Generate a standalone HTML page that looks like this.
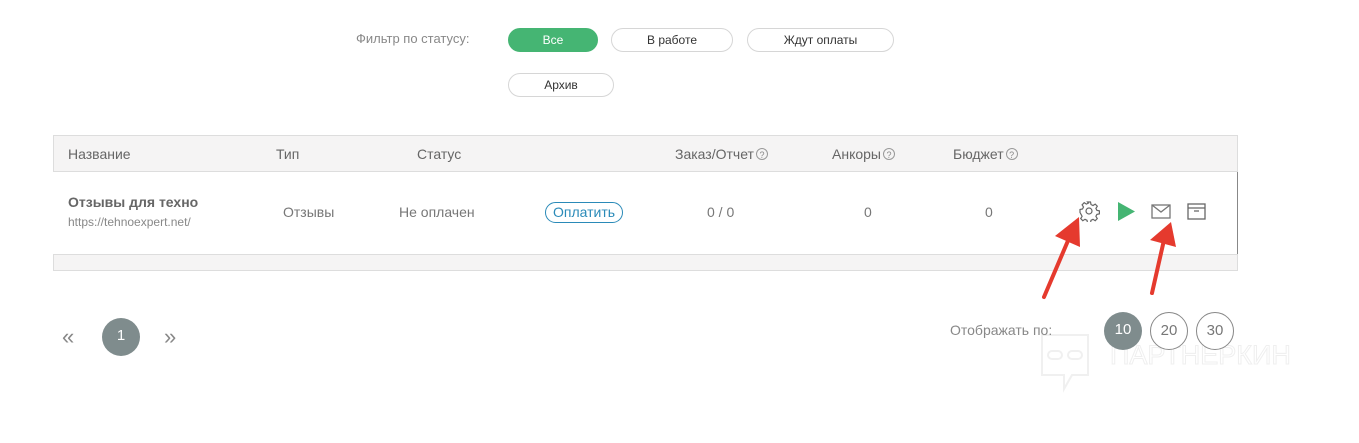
<!DOCTYPE html>
<html><head><meta charset="utf-8"><style>
body{margin:0;width:1359px;height:443px;background:#fff;font-family:"Liberation Sans",sans-serif;position:relative;overflow:hidden;color:#666}
.a{position:absolute}
.btn{position:absolute;height:24px;border:1px solid #d6d6d6;border-radius:13px;box-sizing:border-box;font-size:12px;color:#333;text-align:center;line-height:22px}
.h{position:absolute;top:146px;font-size:14px;color:#666}
.q{display:inline-block;width:12px;height:12px;border:1px solid #999;border-radius:50%;font-size:9px;line-height:12px;text-align:center;color:#888;vertical-align:1px;margin-left:2px;box-sizing:border-box}
.c{position:absolute;top:204px;font-size:14px;color:#777}
.pg{position:absolute;width:38px;height:38px;border-radius:50%;box-sizing:border-box;text-align:center;line-height:36px;font-size:15px}
</style></head><body>
<div class="a" style="left:356px;top:31px;font-size:13px;color:#888">Фильтр по статусу:</div>
<div class="btn" style="left:508px;top:28px;width:90px;background:#45b573;border-color:#45b573;color:#fff">Все</div>
<div class="btn" style="left:611px;top:28px;width:122px">В работе</div>
<div class="btn" style="left:747px;top:28px;width:147px">Ждут оплаты</div>
<div class="btn" style="left:508px;top:73px;width:106px">Архив</div>

<div class="a" style="left:53px;top:135px;width:1185px;height:37px;background:#f5f4f4;border:1px solid #ddd;box-sizing:border-box"></div>
<div class="a" style="left:53px;top:172px;width:1185px;height:82px;border-right:1px solid #888;box-sizing:border-box"></div>
<div class="a" style="left:53px;top:254px;width:1185px;height:17px;background:#f5f4f4;border:1px solid #ddd;box-sizing:border-box"></div>
<div class="h" style="left:68px">Название</div>
<div class="h" style="left:276px">Тип</div>
<div class="h" style="left:417px">Статус</div>
<div class="h" style="left:675px">Заказ/Отчет<span class="q">?</span></div>
<div class="h" style="left:832px">Анкоры<span class="q">?</span></div>
<div class="h" style="left:953px">Бюджет<span class="q">?</span></div>

<div class="a" style="left:68px;top:194px;font-size:14px;font-weight:bold;color:#666">Отзывы для техно</div>
<div class="a" style="left:68px;top:215px;font-size:12px;color:#888">https://tehnoexpert.net/</div>
<div class="c" style="left:283px">Отзывы</div>
<div class="c" style="left:399px">Не оплачен</div>
<div class="a" style="left:545px;top:202px;width:78px;height:21px;border:1px solid #2a8ab8;border-radius:11px;box-sizing:border-box;color:#2a8ab8;font-size:14px;text-align:center;line-height:19px">Оплатить</div>
<div class="c" style="left:707px">0 / 0</div>
<div class="c" style="left:864px">0</div>
<div class="c" style="left:985px">0</div>

<svg class="a" style="left:1078px;top:200px" width="22" height="22" viewBox="0 0 22 22"><g fill="none" stroke="#666" stroke-width="1.2"><circle cx="11" cy="11" r="3"/><path d="M9.5 2h3l.5 2.5 2 1 2.2-1.4 2.1 2.1-1.4 2.2 1 2 2.5.5v3l-2.5.5-1 2 1.4 2.2-2.1 2.1-2.2-1.4-2 1-.5 2.5h-3l-.5-2.5-2-1-2.2 1.4-2.1-2.1 1.4-2.2-1-2L2 12.5v-3l2.5-.5 1-2-1.4-2.2 2.1-2.1 2.2 1.4 2-1z"/></g></svg>
<svg class="a" style="left:1117px;top:201px" width="19" height="21"><path d="M1 1L18 10.5 1 20z" fill="#45b573"/></svg>
<svg class="a" style="left:1151px;top:204px" width="20" height="16"><rect x="1" y="1" width="18" height="13" fill="none" stroke="#777" stroke-width="1.3"/><path d="M1 1l9 7 9-7" fill="none" stroke="#777" stroke-width="1.3"/></svg>
<svg class="a" style="left:1187px;top:203px" width="19" height="17"><rect x="1" y="1" width="17" height="15" fill="none" stroke="#666" stroke-width="1.3"/><path d="M1 5h17M7 8h5" stroke="#666" stroke-width="1.3"/></svg>

<svg class="a" style="left:1040px;top:333px" width="50" height="60"><g fill="none" stroke="#f0f0f0" stroke-width="2"><path d="M2 2h46v40H32l-8 14v-14H2z"/><rect x="8" y="18" width="14" height="8" rx="4"/><rect x="28" y="18" width="14" height="8" rx="4"/></g></svg>
<div class="a" style="left:1110px;top:340px;font-size:27px;color:#fff;-webkit-text-stroke:1px #efefef">ПАРТНЕРКИН</div>

<div class="a" style="left:62px;top:324px;font-size:22px;color:#888">«</div>
<div class="pg" style="left:102px;top:318px;background:#7f8c8d;color:#fff">1</div>
<div class="a" style="left:164px;top:324px;font-size:22px;color:#888">»</div>

<div class="a" style="left:950px;top:322px;font-size:14px;color:#888">Отображать по:</div>
<div class="pg" style="left:1104px;top:312px;background:#7f8c8d;color:#fff">10</div>
<div class="pg" style="left:1150px;top:312px;border:1px solid #888;color:#777;background:#fff">20</div>
<div class="pg" style="left:1196px;top:312px;border:1px solid #888;color:#777;background:#fff">30</div>

<svg class="a" style="left:0;top:0" width="1359" height="443"><g stroke="#e53a2e" stroke-width="4" stroke-linecap="round"><path d="M1044 297L1070 236"/><path d="M1152 293L1164 240"/></g><path d="M1079 217L1055 236 1080 247z" fill="#e53a2e"/><path d="M1171 222L1150 240 1176 247z" fill="#e53a2e"/></svg>
</body></html>
